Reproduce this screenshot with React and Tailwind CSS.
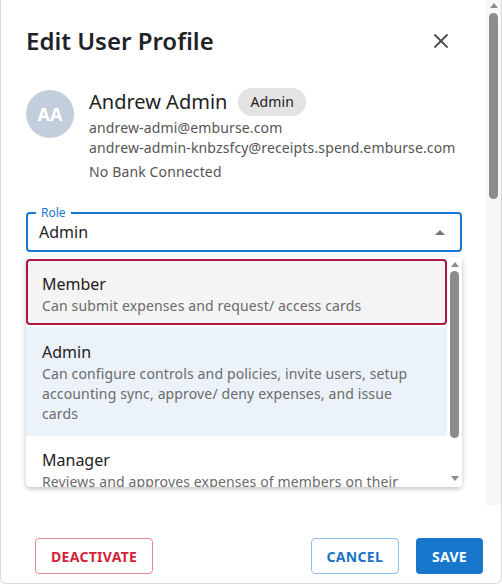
import { X } from "lucide-react";

const ROLES = [
  {
    name: "Member",
    desc: ["Can submit expenses and request/ access cards"],
  },
  {
    name: "Admin",
    desc: [
      "Can configure controls and policies, invite users, setup",
      "accounting sync, approve/ deny expenses, and issue",
      "cards",
    ],
  },
  {
    name: "Manager",
    desc: ["Reviews and approves expenses of members on their"],
  },
];

function ScrollArrow({ up, className }) {
  return (
    <svg width="8" height="5" viewBox="0 0 8 5" className={className}>
      <path d={up ? "M0 5 L4 0 L8 5 Z" : "M0 0 L4 5 L8 0 Z"} fill="#8a8a8a" />
    </svg>
  );
}

function Desc({ lines }) {
  return lines.map((l) => (
    <div key={l} className="text-[14px] leading-[20px] tracking-[0.14px] whitespace-nowrap text-[#6b6b6b]">
      {l}
    </div>
  ));
}

function RoleMenu() {
  return (
    <div className="relative mt-[5px] h-[230px] overflow-hidden rounded-[4px] bg-white shadow-[0_2px_4px_rgba(0,0,0,0.18),0_1px_8px_rgba(0,0,0,0.08)]">
      <div className="mr-[15px] pt-[2px]">
        {/* focused option */}
        <div className="rounded-[4px] bg-[#f4f4f4] px-[16px] pt-[13px] pb-[9px] ring-2 ring-[#ab1842] ring-inset">
          <div className="text-[16px] leading-[24px] text-[#222]">{ROLES[0].name}</div>
          <Desc lines={ROLES[0].desc} />
        </div>
        {/* selected option */}
        <div className="mt-[2px] bg-[#ebf2fa] px-[16px] pt-[13px] pb-[12px]">
          <div className="text-[16px] leading-[24px] text-[#222]">{ROLES[1].name}</div>
          <Desc lines={ROLES[1].desc} />
        </div>
        <div className="px-[16px] pt-[12px]">
          <div className="text-[16px] leading-[24px] text-[#222]">{ROLES[2].name}</div>
          <Desc lines={ROLES[2].desc} />
        </div>
      </div>
      {/* list scrollbar */}
      <div className="absolute top-0 right-0 flex h-full w-[15px] flex-col items-center bg-white">
        <ScrollArrow up className="mt-[5px]" />
        <div className="mt-[4px] h-[167px] w-[9px] rounded-full bg-[#8c8c8c]" />
        <div className="flex-1" />
        <ScrollArrow className="mb-[6px]" />
      </div>
    </div>
  );
}

export default function App() {
  return (
    <div
      className="relative flex h-[584px] w-[502px] flex-col overflow-hidden rounded-b-[6px] border-x border-b border-[#dcdcdc] bg-white"
      style={{ fontFamily: '"Noto Sans", "Open Sans", sans-serif' }}
    >
      <div className="relative h-[505px] overflow-hidden">
        <div className="pr-[39px] pl-[25px]">
          <div className="flex items-center justify-between pt-[25px]">
            <h2 className="text-[24px] leading-[32px] font-semibold text-[#1f2329]">Edit User Profile</h2>
            <button className="mr-[9px] text-[#4d4d4d]">
              <X size={24} strokeWidth={1.8} />
            </button>
          </div>

          <div className="mt-[31px] flex gap-[15px]">
            <div className="mt-[2px] flex h-[48px] w-[48px] shrink-0 items-center justify-center rounded-full bg-[#c3cedc] text-[18px] font-bold text-white">
              AA
            </div>
            <div className="flex flex-col text-[14px] leading-[20px] tracking-[0.14px] text-[#555]">
              <div className="flex items-center gap-[11px] tracking-normal">
                <span className="text-[20px] leading-[28px] text-[#222]">Andrew Admin</span>
                <span className="rounded-full bg-[#e3e3e3] px-[12px] leading-[28px] tracking-[0.14px] text-[#222]">Admin</span>
              </div>
              <span className="mt-[2px]">andrew-admi@emburse.com</span>
              <span>andrew-admin-knbzsfcy@receipts.spend.emburse.com</span>
              <span className="mt-[4px]">No Bank Connected</span>
            </div>
          </div>

          {/* role select, open */}
          <div className="relative mt-[30px] flex h-[40px] items-center rounded-[4px] border-2 border-[#1976d2] px-[11px]">
            <span className="absolute -top-[9px] left-[8px] bg-white px-[5px] text-[12px] leading-[16px] text-[#1976d2]">Role</span>
            <span className="text-[16px] text-[#222]">Admin</span>
            <svg width="10" height="5" viewBox="0 0 10 5" className="mr-[4px] ml-auto">
              <path d="M0 5 L5 0 L10 5 Z" fill="#757575" />
            </svg>
          </div>
          <RoleMenu />
        </div>

        {/* dialog scrollbar */}
        <div className="absolute top-0 right-0 flex h-full w-[15px] flex-col items-center bg-[#f7f7f7]">
          <ScrollArrow up className="mt-[3px]" />
          <div className="mt-[5px] h-[186px] w-[9px] rounded-full bg-[#8c8c8c]" />
        </div>
      </div>

      <div className="flex items-center px-[34px] pt-[33px] pr-[18px]">
        <button className="h-[36px] rounded-[4px] border border-[#e8868d] px-[15px] text-[14px] font-bold tracking-[0.3px] text-[#d1243a]">
          DEACTIVATE
        </button>
        <button className="ml-auto h-[36px] rounded-[4px] border border-[#8ebfec] px-[15px] text-[14px] font-bold tracking-[0.3px] text-[#1a73c6]">
          CANCEL
        </button>
        <button className="ml-[17px] h-[36px] rounded-[4px] bg-[#1677cc] px-[16px] text-[14px] font-bold tracking-[0.3px] text-white">
          SAVE
        </button>
      </div>
    </div>
  );
}
